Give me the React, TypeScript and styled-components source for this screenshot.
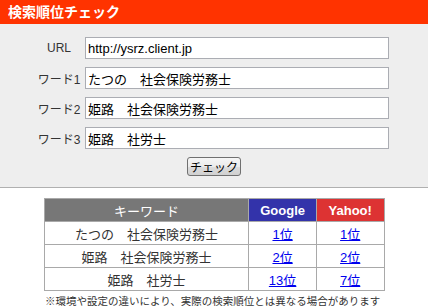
import React from 'react';
import styled, { createGlobalStyle } from 'styled-components';

const GlobalStyle = createGlobalStyle`
  body {
    margin: 0;
    background: #ffffff;
    font-family: "Liberation Sans", "Noto Sans CJK JP", sans-serif;
  }
`;

const Page = styled.div`
  width: 428px;
  display: flex;
  flex-direction: column;
`;

const TitleBar = styled.div`
  height: 24px;
  background: #ff3300;
  color: #ffffff;
  font-size: 14px;
  font-weight: bold;
  line-height: 24px;
  padding-left: 8px;
`;

const FormArea = styled.div`
  background: #eeeeee;
  border-bottom: 1px solid #b0b0b0;
  padding: 13px 0 11px;
  display: flex;
  flex-direction: column;
  align-items: center;
`;

const FormGrid = styled.div`
  display: grid;
  grid-template-columns: 44px 304px;
  column-gap: 2px;
  row-gap: 8px;
  align-items: center;
`;

const Label = styled.label`
  display: flex;
  justify-content: center;
  padding-right: 4px;
  font-size: 12px;
  color: #333333;
  white-space: nowrap;
`;

const Input = styled.input`
  box-sizing: border-box;
  width: 304px;
  height: 22px;
  border: 1px solid #abadb3;
  padding: 0 2px;
  font-family: "Liberation Sans", "Noto Sans CJK JP", sans-serif;
  font-size: 13px;
  color: #000000;
  background: #ffffff;
  outline: none;
`;

const CheckButton = styled.button`
  margin-top: 8px;
  width: 54px;
  height: 19px;
  padding: 0;
  border: 1px solid #707070;
  border-radius: 3px;
  background: linear-gradient(#f6f6f6, #ebebeb 50%, #dddddd 50%, #d0d0d0);
  font-family: "Noto Sans CJK JP", sans-serif;
  font-size: 12px;
  line-height: 17px;
  color: #000000;
`;

const ResultTable = styled.table`
  border-collapse: collapse;
  width: 341px;
  margin: 10px auto 0;
  font-size: 13px;
`;

const HeadCell = styled.th<{ $bg: string; $w: number; $bold?: boolean }>`
  width: ${(p) => p.$w}px;
  height: 22px;
  padding: 0;
  border: 1px solid #a9a9a9;
  background: ${(p) => p.$bg};
  color: #ffffff;
  font-weight: ${(p) => (p.$bold ? 'bold' : 'normal')};
  font-size: 13px;
  text-align: center;
`;

const Cell = styled.td`
  height: 22px;
  padding: 0;
  border: 1px solid #a9a9a9;
  text-align: center;
  color: #333333;
  background: #ffffff;
`;

const RankLink = styled.a`
  color: #0000ee;
  text-decoration: underline;
`;

const Note = styled.p`
  margin: 4px 0 0 45px;
  font-size: 10.5px;
  color: #333333;
  white-space: nowrap;
  line-height: 12px;
`;

const fields = [
  { label: 'URL', value: 'http://ysrz.client.jp' },
  { label: 'ワード1', value: 'たつの　社会保険労務士' },
  { label: 'ワード2', value: '姫路　社会保険労務士' },
  { label: 'ワード3', value: '姫路　社労士' },
];

const results = [
  { word: 'たつの　社会保険労務士', google: '1位', yahoo: '1位' },
  { word: '姫路　社会保険労務士', google: '2位', yahoo: '2位' },
  { word: '姫路　社労士', google: '13位', yahoo: '7位' },
];

const App: React.FC = () => {
  return (
    <Page>
      <GlobalStyle />
      <TitleBar>検索順位チェック</TitleBar>
      <FormArea>
        <FormGrid>
          {fields.map((f) => (
            <React.Fragment key={f.label}>
              <Label>{f.label}</Label>
              <Input defaultValue={f.value} />
            </React.Fragment>
          ))}
        </FormGrid>
        <CheckButton type="button">チェック</CheckButton>
      </FormArea>
      <ResultTable>
        <thead>
          <tr>
            <HeadCell $bg="#777777" $w={207}>キーワード</HeadCell>
            <HeadCell $bg="#3333aa" $w={67} $bold>Google</HeadCell>
            <HeadCell $bg="#dd3333" $w={67} $bold>Yahoo!</HeadCell>
          </tr>
        </thead>
        <tbody>
          {results.map((r) => (
            <tr key={r.word}>
              <Cell>{r.word}</Cell>
              <Cell><RankLink href="#">{r.google}</RankLink></Cell>
              <Cell><RankLink href="#">{r.yahoo}</RankLink></Cell>
            </tr>
          ))}
        </tbody>
      </ResultTable>
      <Note>※環境や設定の違いにより、実際の検索順位とは異なる場合があります</Note>
    </Page>
  );
};

export default App;
